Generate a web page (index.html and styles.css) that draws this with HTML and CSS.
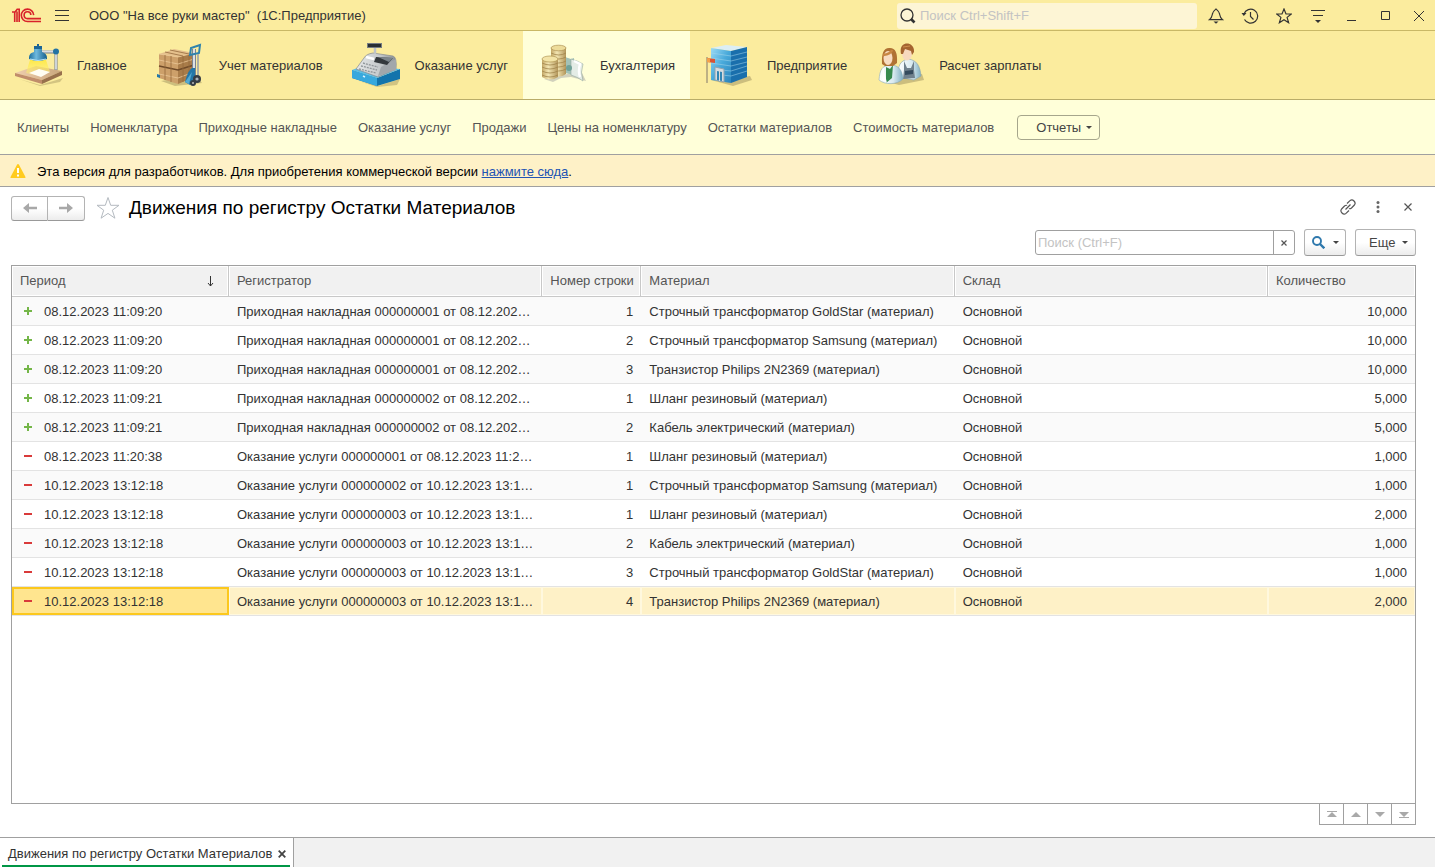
FILE: index.html
```html
<!DOCTYPE html>
<html lang="ru">
<head>
<meta charset="utf-8">
<title>Движения по регистру Остатки Материалов</title>
<link rel="stylesheet" href="styles.css">
</head>
<body>
<header class="titlebar">
  <svg class="logo" width="30" height="15" viewBox="0 0 30 15" fill="none" stroke="#d8222a" stroke-width="1.6"><path d="M0 4h2.700V14M2.700 4.500 5.200 1.200h2V14M5 3.500V14M29 13.500H15.500a6.200 6.200 0 1 1 6.200-6.400M29 10.600H15.500a3.400 3.400 0 1 1 3.400-3.600"/></svg>
  <button class="icon-btn menu" aria-label="Меню"><svg width="14" height="12" viewBox="0 0 14 12" stroke="#333" fill="none"><path d="M0 .5h14M0 5.500h14M0 10.500h14"/></svg></button>
  <span class="app-title">ООО "На все руки мастер"&nbsp; (1С:Предприятие)</span>
  <label class="global-search">
    <svg width="16" height="16" viewBox="0 0 16 16" fill="none" stroke="#333"><circle cx="7" cy="7" r="6" stroke-width="1.3"/><path d="m11 11 3.500 3.500" stroke-width="2.600"/></svg>
    <input type="text" placeholder="Поиск Ctrl+Shift+F" aria-label="Поиск">
  </label>
  <div class="tools">
    <button class="icon-btn" aria-label="Оповещения"><svg width="16" height="16" viewBox="0 0 16 16" fill="none" stroke="#333" stroke-width="1.200"><path d="M1.500 11.600h13C12 9.500 12 8.500 11.600 6 11 3.200 10 2.600 8 1 6 2.600 5 3.200 4.400 6 4 8.500 4 9.500 1.500 11.600z"/><path d="M5.500 13.500h5L8 15.800z" fill="#333" stroke="none"/></svg></button>
    <button class="icon-btn" aria-label="История"><svg width="18" height="16" viewBox="0 0 18 16" fill="none" stroke="#333" stroke-width="1.200"><path d="M3 6a7 7 0 1 1 .5 5.500M9.500 4v4.500l3 3"/><path d="M.5 5h5L2.800 8z" fill="#333" stroke="none"/></svg></button>
    <button class="icon-btn" aria-label="Избранное"><svg width="16" height="16" viewBox="0 0 16 16" fill="none" stroke="#333" stroke-width="1.200"><path d="m8 1 2 5h5.300l-4.200 3.400 1.500 5.300L8 11.700l-4.600 3 1.500-5.300L.7 6H6z"/></svg></button>
    <button class="icon-btn" aria-label="Настройки"><svg width="14" height="14" viewBox="0 0 14 14" fill="none" stroke="#333"><path d="M0 1.500h14M2 6.500h10"/><path d="M4 11h6l-3 3z" fill="#333" stroke="none"/></svg></button>
    <button class="icon-btn" aria-label="Свернуть"><svg width="10" height="10" viewBox="0 0 10 10" stroke="#333"><path d="M0 9.500h9"/></svg></button>
    <button class="icon-btn" aria-label="Развернуть"><svg width="10" height="10" viewBox="0 0 10 10" fill="none" stroke="#333"><path d="M.5.500h8v8h-8z"/></svg></button>
    <button class="icon-btn" aria-label="Закрыть"><svg width="10" height="10" viewBox="0 0 10 10" stroke="#333"><path d="m0 0 10 10M10 0 0 10"/></svg></button>
  </div>
</header>

<nav class="sections" aria-label="Разделы">
  <a class="section" href="#">
    <svg width="50" height="44" viewBox="0 0 50 44">
      <defs><linearGradient id="blue" x1="0" x2="1"><stop stop-color="#1b6d9c"/><stop offset=".4" stop-color="#6fb9de"/><stop offset="1" stop-color="#145d8c"/></linearGradient>
      <linearGradient id="wood" x1="0" x2="1"><stop stop-color="#f0cfae"/><stop offset="1" stop-color="#c8a67c"/></linearGradient>
      <linearGradient id="light" x1="0" y1="0" x2="0" y2="1"><stop stop-color="#ffe838"/><stop offset="1" stop-color="#fff27a" stop-opacity=".5"/></linearGradient></defs>
      <path d="M6 36 27 42l23-7-3 4-20 4z" fill="#8a7a4a" opacity=".35"/>
      <path d="m2 30 21-7 26 5-20 9z" fill="url(#wood)"/><path d="m2 30 27 7v4L2 33z" fill="#c08d6b"/><path d="m29 37 20-9v4l-20 9z" fill="#98714d"/>
      <path d="M17 17 13 30q10 4 24-1L33 17z" fill="url(#light)" opacity=".85"/>
      <path d="m16 30 10-4 11 3-9 5z" fill="#fffef2"/>
      <path d="M28 9h15v18" fill="none" stroke="#777f89" stroke-width="3"/><path d="M28 8.500h15v18" fill="none" stroke="#d8dde2" stroke-width="1.800"/>
      <circle cx="43" cy="8.500" r="3" fill="#2372a3"/>
      <path d="M21 5h8v4c5 2 5 4 5 7q-9 4-18 0c0-4 1-6 5-7z" fill="url(#blue)"/><path d="M21 3h8v3h-8zM24 1h2v3h-2z" fill="#1b6596"/><path d="M17 16q8 3 16 0" stroke="#b8e1f5" fill="none"/>
    </svg><span>Главное</span></a>
  <a class="section" href="#">
    <svg width="50" height="44" viewBox="0 0 50 44">
      <path d="m6 38 14 5 27-3-7-8z" fill="#887a4d" opacity=".4"/>
      <path d="m4 11 15-5 20 4-16 4z" fill="#e5c08c"/><path d="m4 11 19 3v27L4 35z" fill="#cda06a"/><path d="m23 14 16-4v24l-16 7z" fill="#a97c49"/>
      <path d="m4 11 19 3 16-4M4 17l19 4 16-5M4 31l19 4 16-6" fill="none" stroke="#ebc898" stroke-width=".8"/><path d="m4 23 19 4 16-5" fill="none" stroke="#6f4a28" stroke-width="1.600"/>
      <path d="M10 12v25M16 13v26M28 13v26M34 12v25M10 9l18 4M15 7l19 4" stroke="#946a3e" stroke-width=".8" fill="none"/>
      <path d="M39 6v31" stroke="#727b85" stroke-width="4"/><path d="M39 6v30" stroke="#dce0e4" stroke-width="2.200"/>
      <path d="m35 12 1-7 9-3-1 8z" fill="none" stroke="#2f83ad" stroke-width="2"/><path d="M43 11v22" stroke="#9ba2a9" stroke-width="1.600"/>
      <path d="M37 25q-4 2-7 14l5 3 5-4V25z" fill="#2377a8"/><path d="m30 39 4 2 3-12z" fill="#55aad1"/><path d="m2 31 3 1v3l-3-1z" fill="#2377a8"/>
      <circle cx="42" cy="36" r="4" fill="#353c44"/><circle cx="42" cy="36" r="1.600" fill="#aab2b9"/><circle cx="38" cy="40" r="3" fill="#353c44"/><circle cx="38" cy="40" r="1" fill="#bbb"/>
    </svg><span>Учет материалов</span></a>
  <a class="section" href="#">
    <svg width="50" height="44" viewBox="0 0 50 44">
      <defs><linearGradient id="metal" x1="0" x2="1"><stop stop-color="#e5e8e9"/><stop offset=".6" stop-color="#c5c9cb"/><stop offset="1" stop-color="#888f94"/></linearGradient></defs>
      <path d="m8 38 19 5 22-7-3 6-20 2z" fill="#887a4d" opacity=".35"/>
      <path d="m1 27 25 8 23-9v10l-23 7L1 35z" fill="#1374ac"/><path d="m1 27 25 8v8L1 35z" fill="#37a8dd"/><path d="m1 27 11-4 37 3-23 9z" fill="#58bee8"/>
      <path d="m5 26 8-11q2-4 9-5l20 3q4 1 3 13l-18 8z" fill="url(#metal)" stroke="#858a8e" stroke-width=".7"/>
      <path d="m27 33 3-9 15-8v11z" fill="#a2a7ab"/><path d="m25 14 17 1-6 7-13-3z" fill="#34393d"/><path d="m27 14 15 1-4 4z" fill="#7c858b"/>
      <path d="m12 20 15 4M10 23l16 4M8 26l17 4" stroke="#90969a" stroke-width="1.300" stroke-dasharray="2 1"/><path d="m15 14 8 2" stroke="#fff" stroke-width="2.500"/>
      <path d="M24 5v6" stroke="#bfc4c7" stroke-width="2.500"/><path d="M16 0h15v5H16z" fill="#777d82"/><path d="M17 1h13v3H17z" fill="#292e32"/>
      <path d="m12 33 2 1" stroke="#d9f3ff" stroke-width="1.500"/>
    </svg><span>Оказание услуг</span></a>
  <a class="section active" href="#" aria-current="page">
    <svg width="50" height="44" viewBox="0 0 50 44">
      <defs><linearGradient id="gold" x1="0" x2="1"><stop stop-color="#c4a766"/><stop offset=".4" stop-color="#f3e6b3"/><stop offset="1" stop-color="#b2955a"/></linearGradient></defs>
      <path d="m8 36 9 3 8-4 10-1 15 4-5-10z" fill="#999" opacity=".45"/>
      <path d="m29 14 6 2 3-1v17l-9-2z" fill="#a3c2b7"/><path d="m35 16 6 2 6 3q-3 8 0 17-5-4-12-6z" fill="#e4ece6" stroke="#96aaa1" stroke-width=".6"/><path d="m38 18 6 3q-2 7 0 13" fill="none" stroke="#fff" stroke-width="2.500"/><circle cx="33" cy="25" r="3" fill="#70a197"/>
      <path d="M15 5v26q8 5 15 0V5z" fill="url(#gold)"/><path d="M15 10q8 4 15 0M15 14q8 4 15 0M15 18q8 4 15 0M15 22q8 4 15 0M15 26q8 4 15 0" fill="none" stroke="#a1854c" stroke-width=".8"/><ellipse cx="22.500" cy="5" rx="7.500" ry="2.800" fill="#eddc9a" stroke="#ae9153" stroke-width=".7"/>
      <path d="M6 16v18q8 5 16 0V16z" fill="url(#gold)"/><path d="M6 20q8 4 16 0M6 24q8 4 16 0M6 28q8 4 16 0M6 32q8 4 16 0" fill="none" stroke="#a1854c" stroke-width=".8"/><ellipse cx="14" cy="16" rx="8" ry="3" fill="#f3e4a7" stroke="#b09655" stroke-width=".7"/>
    </svg><span>Бухгалтерия</span></a>
  <a class="section" href="#">
    <svg width="50" height="44" viewBox="0 0 50 44">
      <defs><linearGradient id="glass" x1="0" y1="0" x2="1" y2="1"><stop stop-color="#9bdaf4"/><stop offset=".5" stop-color="#48a9da"/><stop offset="1" stop-color="#2a83bb"/></linearGradient></defs>
      <path d="m8 37 22 6 19-6-2-4-12 2z" fill="#887a4d" opacity=".4"/>
      <path d="m8 5 15-3 21 2-16 4z" fill="#dceef5"/><path d="m8 5 20 3v32L8 37z" fill="url(#glass)"/><path d="m28 8 16-4v30l-16 6z" fill="#1a6fac"/>
      <path d="m8 10 20 3 16-4M8 15l20 3 16-4M8 20l20 3 16-4M18 27l10 1 16-5M19 32l9 1 16-5" fill="none" stroke="#a4d6ec" stroke-width=".7" opacity=".75"/>
      <path d="m12 24 9 2v13l-9-2z" fill="#d6dce0" stroke="#8ea4b1"/><path d="m14 28 5 1v9l-5-1z" fill="#3286b4"/><path d="M16.500 28v10" stroke="#ddd"/>
      <path d="M4 14v26" stroke="#80776b"/><path d="m4 15 8 1v4l-8-1z" fill="#dc5434"/><path d="m4 15 3 .5v4L4 19z" fill="#f3a04a"/>
    </svg><span>Предприятие</span></a>
  <a class="section" href="#">
    <svg width="50" height="44" viewBox="0 0 50 44">
      <defs><linearGradient id="coat" x1="0" x2="1"><stop stop-color="#fff"/><stop offset=".6" stop-color="#d9eaf0"/><stop offset="1" stop-color="#80afc3"/></linearGradient></defs>
      <path d="m9 38 15 4 25-5-2-6-12 2z" fill="#887a4d" opacity=".4"/>
      <path d="M23 34c0-12 2-16 10-18 9 1 12 7 13 17l-7 4z" fill="url(#coat)" stroke="#88a2ad" stroke-width=".6"/><path d="M29 18v9l-1 9 12-1-1-8v-9l-3 7h-4z" fill="#70818d"/><path d="m30 28 8-1v4l-8 1z" fill="#354b5d"/>
      <ellipse cx="32" cy="10.500" rx="5" ry="7" fill="#f7d9be"/><path d="M26 11c-3-14 14-13 13-2l-2 3-1-4-6-2-2 5z" fill="#a4642f"/><path d="m28 4 7-1" stroke="#cf8f4e"/>
      <path d="M4 37c1-11 3-14 11-15 8 0 12 4 13 14-6 6-18 6-24 1z" fill="url(#coat)" stroke="#88aab8" stroke-width=".6"/><path d="m11 24 4 2 3-4-1 13-6 5z" fill="#378a4e"/><path d="m8 24-1 13 5 3z" fill="#fff"/>
      <path d="M7 21q-1-17 8-16 8 0 7 15l-4 3h-8z" fill="#b07234"/><ellipse cx="13" cy="15" rx="4.500" ry="7" fill="#f8dcc2"/><path d="M8 12q8-1 9-5" stroke="#c88743" stroke-width="2.500" fill="none"/>
    </svg><span>Расчет зарплаты</span></a>
</nav>

<nav class="commands" aria-label="Бухгалтерия">
  <a href="#">Клиенты</a><a href="#">Номенклатура</a><a href="#">Приходные накладные</a><a href="#">Оказание услуг</a><a href="#">Продажи</a><a href="#">Цены на номенклатуру</a><a href="#">Остатки материалов</a><a href="#">Стоимость материалов</a>
  <button class="reports">Отчеты<i class="caret"></i></button>
</nav>

<div class="notice">
  <svg width="16" height="14" viewBox="0 0 16 14"><path d="M8 0q.7 0 1 .7L15.500 13q.3 1-.6 1H1q-.9 0-.5-1L7 .7Q7.300 0 8 0z" fill="#ffcb1f"/><path d="M8 4v5M8 10.500v2" stroke="#fff" stroke-width="2"/></svg>
  <p>Эта версия для разработчиков. Для приобретения коммерческой версии <a href="#">нажмите сюда</a>.</p>
</div>

<main class="form">
  <div class="form-head">
    <div class="history">
      <button aria-label="Назад"><svg width="14" height="10" viewBox="0 0 14 10" fill="#a8a8a8"><path d="M0 5 6 0v3.700h8v2.600H6V10z"/></svg></button>
      <button aria-label="Вперед"><svg width="14" height="10" viewBox="0 0 14 10" fill="#a8a8a8"><path d="M14 5 8 0v3.700H0v2.600h8V10z"/></svg></button>
    </div>
    <button class="icon-btn fav" aria-label="В избранное"><svg width="24" height="24" viewBox="0 0 24 24" fill="#fff" stroke="#b4bac0"><path d="m12 1.500 2.700 7.800H23l-6.700 4.900 2.600 8L12 17.400l-6.900 4.800 2.600-8L1 9.300h8.300z"/></svg></button>
    <h1>Движения по регистру Остатки Материалов</h1>
    <div class="form-tools">
      <button class="icon-btn" aria-label="Получить ссылку"><svg width="16" height="16" viewBox="0 0 16 16" fill="none" stroke="#555" stroke-width="1.200"><path d="M7 4.500 10 1.600q2-1.600 4 .4t.4 4L11.500 9q-1.500 1.200-2.500.5M9 11.500 6 14.400q-2 1.600-4-.4t-.4-4L4.500 7Q6 5.800 7 6.500M5.500 10.500l5-5"/></svg></button>
      <button class="icon-btn" aria-label="Еще"><svg width="4" height="12" viewBox="0 0 4 12" fill="#666"><circle cx="2" cy="1.500" r="1.500"/><circle cx="2" cy="6" r="1.500"/><circle cx="2" cy="10.500" r="1.500"/></svg></button>
      <button class="icon-btn" aria-label="Закрыть"><svg width="8" height="8" viewBox="0 0 8 8" stroke="#555" stroke-width="1.200"><path d="m.5.500 7 7M7.500.5l-7 7"/></svg></button>
    </div>
  </div>
  <div class="toolbar">
    <div class="search">
      <input type="text" placeholder="Поиск (Ctrl+F)" aria-label="Поиск в списке">
      <button aria-label="Очистить"><svg width="6" height="6" viewBox="0 0 6 6" stroke="#555" stroke-width="1.200"><path d="m.5.500 5 5M5.500.5l-5 5"/></svg></button>
    </div>
    <button class="btn find" aria-label="Найти"><svg width="13" height="13" viewBox="0 0 13 13" fill="none" stroke="#2f79ad"><circle cx="5" cy="5" r="4" stroke-width="1.900"/><path d="m8 8 4.300 4.300" stroke-width="2.400"/></svg><i class="caret"></i></button>
    <button class="btn more"><span>Еще</span><i class="caret"></i></button>
  </div>
  <div class="list">
    <table>
      <colgroup><col class="c-period"><col><col class="c-line"><col><col><col class="c-qty"></colgroup>
      <thead><tr><th><div class="sort">Период<svg width="7" height="11" viewBox="0 0 7 11" fill="none" stroke="#333"><path d="M3.500 0v10M1 7l2.500 3L6 7"/></svg></div></th><th>Регистратор</th><th class="num">Номер строки</th><th>Материал</th><th>Склад</th><th>Количество</th></tr></thead>
      <tbody>
        <tr><td><i class="plus"></i>08.12.2023 11:09:20</td><td>Приходная накладная 000000001 от 08.12.202…</td><td class="num">1</td><td>Строчный трансформатор GoldStar (материал)</td><td>Основной</td><td class="num">10,000</td></tr>
        <tr><td><i class="plus"></i>08.12.2023 11:09:20</td><td>Приходная накладная 000000001 от 08.12.202…</td><td class="num">2</td><td>Строчный трансформатор Samsung (материал)</td><td>Основной</td><td class="num">10,000</td></tr>
        <tr><td><i class="plus"></i>08.12.2023 11:09:20</td><td>Приходная накладная 000000001 от 08.12.202…</td><td class="num">3</td><td>Транзистор Philips 2N2369 (материал)</td><td>Основной</td><td class="num">10,000</td></tr>
        <tr><td><i class="plus"></i>08.12.2023 11:09:21</td><td>Приходная накладная 000000002 от 08.12.202…</td><td class="num">1</td><td>Шланг резиновый (материал)</td><td>Основной</td><td class="num">5,000</td></tr>
        <tr><td><i class="plus"></i>08.12.2023 11:09:21</td><td>Приходная накладная 000000002 от 08.12.202…</td><td class="num">2</td><td>Кабель электрический (материал)</td><td>Основной</td><td class="num">5,000</td></tr>
        <tr><td><i class="minus"></i>08.12.2023 11:20:38</td><td>Оказание услуги 000000001 от 08.12.2023 11:2…</td><td class="num">1</td><td>Шланг резиновый (материал)</td><td>Основной</td><td class="num">1,000</td></tr>
        <tr><td><i class="minus"></i>10.12.2023 13:12:18</td><td>Оказание услуги 000000002 от 10.12.2023 13:1…</td><td class="num">1</td><td>Строчный трансформатор Samsung (материал)</td><td>Основной</td><td class="num">1,000</td></tr>
        <tr><td><i class="minus"></i>10.12.2023 13:12:18</td><td>Оказание услуги 000000003 от 10.12.2023 13:1…</td><td class="num">1</td><td>Шланг резиновый (материал)</td><td>Основной</td><td class="num">2,000</td></tr>
        <tr><td><i class="minus"></i>10.12.2023 13:12:18</td><td>Оказание услуги 000000003 от 10.12.2023 13:1…</td><td class="num">2</td><td>Кабель электрический (материал)</td><td>Основной</td><td class="num">1,000</td></tr>
        <tr><td><i class="minus"></i>10.12.2023 13:12:18</td><td>Оказание услуги 000000003 от 10.12.2023 13:1…</td><td class="num">3</td><td>Строчный трансформатор GoldStar (материал)</td><td>Основной</td><td class="num">1,000</td></tr>
        <tr class="selected"><td><i class="minus"></i>10.12.2023 13:12:18</td><td>Оказание услуги 000000003 от 10.12.2023 13:1…</td><td class="num">4</td><td>Транзистор Philips 2N2369 (материал)</td><td>Основной</td><td class="num">2,000</td></tr>
      </tbody>
    </table>
  </div>
  <div class="pager">
    <button aria-label="В начало"><svg width="10" height="7" viewBox="0 0 10 7" fill="#a9a9a9"><path d="M0 0h10v1H0zM5 1l5 5H0z"/></svg></button>
    <button aria-label="Вверх"><svg width="10" height="7" viewBox="0 0 10 7" fill="#a9a9a9"><path d="m5 1 5 5H0z"/></svg></button>
    <button aria-label="Вниз"><svg width="10" height="7" viewBox="0 0 10 7" fill="#a9a9a9"><path d="M0 1h10L5 6z"/></svg></button>
    <button aria-label="В конец"><svg width="10" height="7" viewBox="0 0 10 7" fill="#a9a9a9"><path d="M0 1h10L5 6zM0 6h10v1H0z"/></svg></button>
  </div>
</main>

<footer class="windows">
  <div class="window-tab"><a href="#">Движения по регистру Остатки Материалов</a><button class="icon-btn" aria-label="Закрыть вкладку"><svg width="8" height="8" viewBox="0 0 8 8" stroke="#444" stroke-width="1.800"><path d="m.7.700 6.600 6.600M7.300.7.700 7.300"/></svg></button></div>
</footer>
</body>
</html>
```
FILE: styles.css
```css
* { box-sizing: border-box; }
body {
  margin: 0;
  min-height: 100vh;
  display: flex;
  flex-direction: column;
  background: #fff;
  color: #333;
  font: 13px/16px "Liberation Sans", Arial, sans-serif;
}
button, input { font: inherit; color: inherit; margin: 0; }
a { color: inherit; text-decoration: none; }
button { padding: 0; background: none; border: 0; }
input:focus { outline: none; }
svg { display: block; flex: none; }
input::placeholder { color: #c3c3c3; opacity: 1; }

.icon-btn { display: flex; align-items: center; justify-content: center; }
.caret {
  border: 3px solid transparent;
  border-top-color: #444;
  border-bottom: 0;
}

.titlebar {
  display: flex;
  align-items: center;
  height: 31px;
  padding: 1px 0 0 12px;
  background: #fbec9e;
  border-bottom: 1px solid #c9b866;
}
.menu { width: 14px; margin: 0 20px 0 13px; }
.app-title { padding-top: 1px; }
.global-search {
  display: flex;
  align-items: center;
  gap: 4px;
  width: 300px;
  height: 26px;
  margin-left: auto;
  padding-left: 3px;
  background: #fdf5d5;
  border-radius: 3px;
}
.global-search input { flex: 1; min-width: 0; padding: 0; border: 0; background: none; }
.tools { display: flex; margin-left: 2px; }
.tools .icon-btn { width: 34px; height: 29px; }
.tools .icon-btn:last-child { width: 32px; }

.sections {
  display: flex;
  height: 69px;
  background: #fbec9e;
  border-bottom: 1px solid #b9ac68;
}
.section {
  display: flex;
  align-items: center;
  gap: 14px;
  padding: 0 15px 0 13px;
}
.section span { padding-top: 2px; }
.section.active { background: #ffffd9; }

.commands {
  display: flex;
  align-items: center;
  gap: 21px;
  height: 55px;
  padding-left: 17px;
  background: #ffffd9;
  border-bottom: 1px solid #a0a0a0;
  color: #555;
}
.commands a { padding-top: 2px; }
.reports {
  display: flex;
  align-items: center;
  gap: 5px;
  height: 25px;
  margin-left: 2px;
  padding: 1px 7px 0 18px;
  border: 1px solid #a6a68c;
  border-radius: 4px;
  color: #444;
}

.notice {
  display: flex;
  align-items: center;
  gap: 11px;
  height: 32px;
  padding-left: 10px;
  background: #fef1c7;
  border-bottom: 1px solid #a0a0a0;
  color: #000;
}
.notice p { margin: 0; padding-top: 2px; }
.notice a { color: #2254b4; text-decoration: underline; }

.form {
  flex: 1;
  display: flex;
  flex-direction: column;
  padding: 8px 19px 12px 11px;
}
.form-head { display: flex; align-items: center; height: 26px; }
.history { display: flex; }
.history button {
  display: flex;
  align-items: center;
  justify-content: center;
  width: 37px;
  height: 25px;
  border: 1px solid #b3b3b3;
  border-bottom-color: #999;
  background: linear-gradient(#fff 50%, #ececec);
}
.history button:first-child { border-radius: 3px 0 0 3px; }
.history button:last-child { border-left: 0; border-radius: 0 3px 3px 0; }
.fav { margin: 0 9px 0 11px; }
h1 { margin: 0; font-size: 19px; line-height: 22px; font-weight: 400; color: #000; }
.form-tools { display: flex; align-self: flex-start; margin-left: auto; margin-right: -7px; }
.form-tools .icon-btn { width: 30px; height: 24px; }

.toolbar { display: flex; justify-content: flex-end; gap: 9px; height: 26px; margin: 8px 0 10px; }
.search {
  display: flex;
  width: 260px;
  height: 25px;
  margin-top: 1px;
  border: 1px solid #a0a0a0;
  border-radius: 3px;
}
.search input { flex: 1; min-width: 0; padding: 0 2px; border: 0; background: none; }
.search button {
  display: flex;
  align-items: center;
  justify-content: center;
  width: 21px;
  border-left: 1px solid #a0a0a0;
}
.btn {
  display: flex;
  align-items: center;
  height: 27px;
  border: 1px solid #b3b3b3;
  border-bottom-color: #999;
  border-radius: 3px;
  background: linear-gradient(#fff 50%, #ececec);
  color: #444;
}
.find { gap: 8px; width: 42px; padding-left: 7px; }
.more { gap: 7px; width: 61px; padding-left: 13px; }

.list { flex: 1; border: 1px solid #a0a0a0; }
table { width: 100%; table-layout: fixed; border-collapse: separate; border-spacing: 0; }
.c-period { width: 217px; }
.c-line { width: 99px; }
.c-qty { width: 147px; }
th, td { text-align: left; font-weight: 400; white-space: nowrap; overflow: hidden; }
th {
  height: 31px;
  padding: 0 8px;
  background: #f1f1f1;
  border-bottom: 1px solid #c8c8c8;
  border-right: 1px solid #c8c8c8;
  box-shadow: inset 0 0 0 1px #fff;
  color: #555;
}
th:last-child { border-right: 0; }
.sort { display: flex; align-items: center; justify-content: space-between; padding-right: 6px; }
td { height: 29px; padding: 2px 8px 0; border-bottom: 1px solid #e3e3e3; }
td:first-child { padding-left: 12px; }
.num { text-align: right; }
tbody tr:nth-child(odd) { background: #fafafa; }
tbody tr.selected { background: #fef1c7; }
.selected td { box-shadow: inset 0 0 0 1px #fff8de; }
.selected td:first-child { background: #ffe58f; box-shadow: inset 0 0 0 2px #fcc81d; }
.plus, .minus {
  display: inline-block;
  width: 8px;
  height: 8px;
  margin-right: 12px;
  vertical-align: 1px;
  background: linear-gradient(#d93a3a, #d93a3a) center / 8px 2px no-repeat;
}
.plus {
  background:
    linear-gradient(#74b648, #74b648) center / 8px 2px no-repeat,
    linear-gradient(#74b648, #74b648) center / 2px 8px no-repeat;
}

.pager { display: flex; align-self: flex-end; margin-top: -1px; border: 1px solid #a0a0a0; }
.pager button {
  display: flex;
  align-items: center;
  justify-content: center;
  width: 24px;
  height: 20px;
  border-right: 1px solid #a0a0a0;
}
.pager button:last-child { width: 23px; border-right: 0; }

.windows { display: flex; height: 30px; background: #f1f1f1; border-top: 1px solid #a0a0a0; }
.window-tab {
  display: flex;
  align-items: center;
  gap: 6px;
  padding: 2px 7px 0 8px;
  border-right: 1px solid #a0a0a0;
  background: linear-gradient(#009646, #009646) 2px 100% / calc(100% - 5px) 2px no-repeat #fff;
}
```
